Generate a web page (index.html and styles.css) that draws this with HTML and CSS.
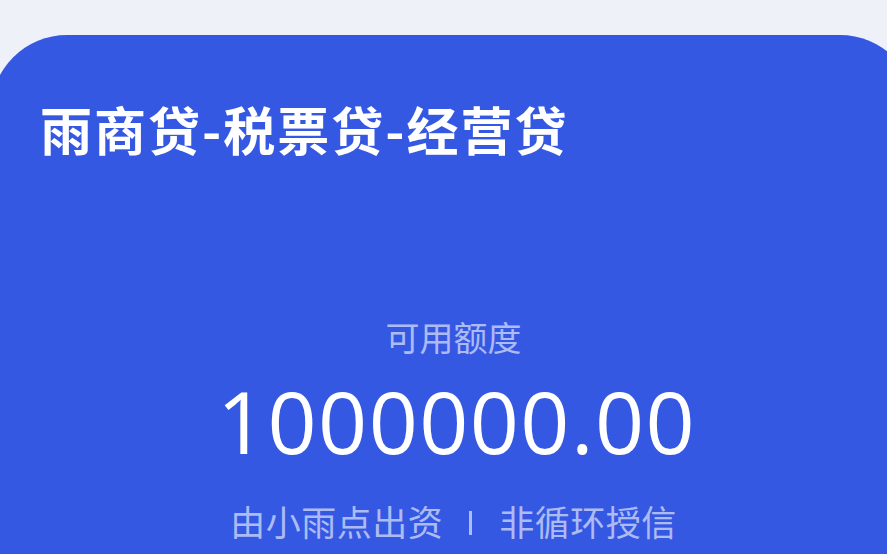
FILE: index.html
```html
<!DOCTYPE html>
<html lang="zh-CN">
<head>
<meta charset="utf-8">
<title>雨商贷</title>
<link rel="stylesheet" href="styles.css">
</head>
<body>
<div class="page">
  <section class="card">
    <h1 class="title">雨商贷-税票贷-经营贷</h1>
    <div class="quota">
      <div class="quota-label">可用额度</div>
      <div class="quota-amount">1000000.00</div>
      <div class="quota-meta">
        <span>由小雨点出资</span>
        <span class="sep"></span>
        <span>非循环授信</span>
      </div>
    </div>
  </section>
</div>
</body>
</html>
```
FILE: styles.css
```css
html, body {
  margin: 0;
  padding: 0;
  background: #eff1f9;
  overflow: hidden;
}
.page {
  width: 887px;
  height: 554px;
  overflow: hidden;
  padding-top: 35px;
  box-sizing: border-box;
}
.card {
  margin-left: -9px;
  width: 925px;
  height: 600px;
  background: #3558e3;
  border-radius: 76px 76px 0 0;
  box-sizing: border-box;
  padding: 59px 0 0 49px;
  color: #fff;
  font-family: "Noto Sans CJK SC", "Noto Sans", sans-serif;
}
.title {
  margin: 0;
  font-size: 52px;
  font-weight: 700;
  line-height: 70px;
  letter-spacing: 2px;
}
.quota {
  margin-left: -49px;
  margin-top: 151px;
  display: flex;
  flex-direction: column;
  align-items: center;
}
.quota-label {
  font-size: 34px;
  line-height: 44px;
  color: rgba(255, 255, 255, 0.6);
}
.quota-amount {
  font-family: "Open Sans", "Noto Sans", sans-serif;
  font-weight: 400;
  font-size: 86px;
  line-height: 90px;
  letter-spacing: 1.4px;
  margin-top: 17px;
  padding-left: 6px;
}
.quota-meta {
  display: flex;
  align-items: center;
  font-size: 35px;
  line-height: 44px;
  letter-spacing: 0.5px;
  margin-top: 33px;
  color: rgba(255, 255, 255, 0.6);
}
.sep {
  flex-shrink: 0;
  display: block;
  width: 3px;
  height: 24px;
  background: rgba(255, 255, 255, 0.6);
  margin: 4px 27px 0 26px;
}
```
